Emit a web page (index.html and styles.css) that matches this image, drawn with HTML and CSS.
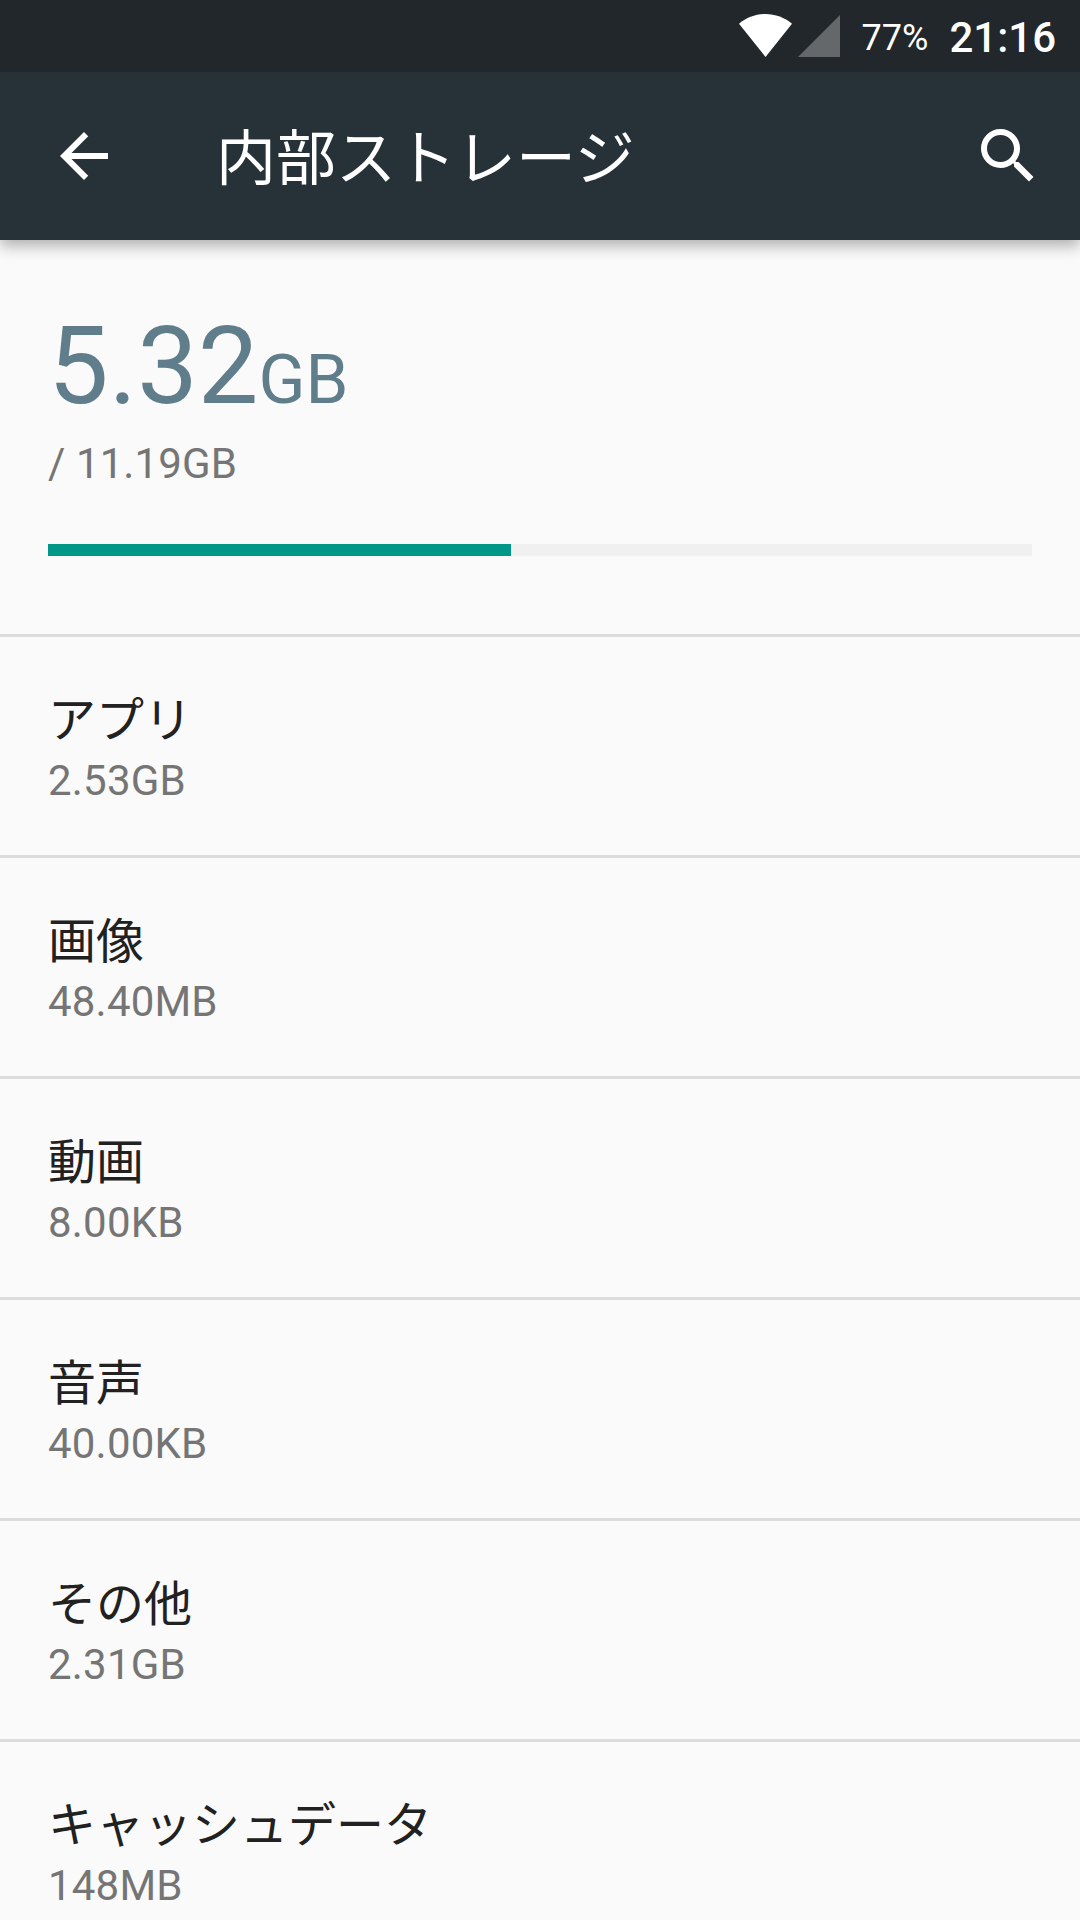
FILE: index.html
```html
<!DOCTYPE html>
<html lang="ja">
<head>
  <meta charset="UTF-8" />
  <meta name="viewport" content="width=device-width, initial-scale=1" />
  <title>内部ストレージ</title>
  <link rel="stylesheet" href="styles.css">
</head>
<body>
  <div class="status-bar">
    <svg class="wifi" viewBox="0 0 53 43"><path d="M0 9.700C7.500 3.500 16.500 0 26.500 0S45.500 3.500 53 9.700L26.500 43z" fill="#fff"/></svg>
    <svg class="signal" viewBox="0 0 42 42"><path d="M42 0v42H0z" fill="#64686a"/></svg>
    <span class="battery">77%</span>
    <span class="clock">21:16</span>
  </div>

  <header class="toolbar">
    <svg class="back" viewBox="0 0 24 24"><path d="M20 11H7.830l5.590-5.590L12 4l-8 8 8 8 1.410-1.410L7.830 13H20v-2z" fill="#fff"/></svg>
    <h1>内部ストレージ</h1>
    <svg class="search" viewBox="0 0 24 24"><path d="M15.500 14h-.79l-.28-.27A6.471 6.471 0 0 0 16 9.500 6.500 6.500 0 1 0 9.500 16c1.610 0 3.090-.59 4.230-1.570l.27.28v.79l5 4.990L20.490 19l-4.990-5zm-6 0C7.010 14 5 11.990 5 9.500S7.010 5 9.500 5 14 7.010 14 9.500 11.990 14 9.500 14z" fill="#fff"/></svg>
  </header>

  <main>
    <section class="summary">
      <div class="used">5.32<span class="unit">GB</span></div>
      <div class="total">/ 11.19GB</div>
      <div class="progress"><div class="progress-fill" style="width: 47.05%"></div></div>
    </section>

    <ul class="list">
      <li><div class="name">アプリ</div><div class="size">2.53GB</div></li>
      <li><div class="name">画像</div><div class="size">48.40MB</div></li>
      <li><div class="name">動画</div><div class="size">8.00KB</div></li>
      <li><div class="name">音声</div><div class="size">40.00KB</div></li>
      <li><div class="name">その他</div><div class="size">2.31GB</div></li>
      <li><div class="name">キャッシュデータ</div><div class="size">148MB</div></li>
    </ul>
  </main>
</body>
</html>
```
FILE: styles.css
```css
* {
  box-sizing: border-box;
}

body {
  margin: 0;
  height: 1920px;
  overflow: hidden;
  display: flex;
  flex-direction: column;
  background-color: #fafafa;
  color: #212121;
  font-family: Roboto, "Noto Sans CJK JP", sans-serif;
}

svg {
  display: block;
  flex: none;
}

/* Status bar, stays above the toolbar shadow */
.status-bar {
  flex: none;
  position: relative;
  z-index: 2;
  height: 72px;
  padding-right: 24px;
  display: flex;
  align-items: center;
  justify-content: flex-end;
  background-color: #21272b;
  color: #fff;
}

.wifi {
  width: 53px;
  height: 43px;
  margin-bottom: 1px;
}

.signal {
  width: 42px;
  height: 42px;
  margin-left: 6px;
}

.battery {
  margin: 4px 0 0 22px;
  font-size: 36px;
  line-height: 68px;
}

.clock {
  margin: 4px 0 0 21px;
  font-size: 42px;
  font-weight: 500;
  line-height: 68px;
}

/* Toolbar */
.toolbar {
  flex: none;
  position: relative;
  z-index: 1;
  height: 168px;
  padding: 0 36px 0 48px;
  display: flex;
  align-items: center;
  background-color: #263238;
  color: #fff;
  box-shadow: 0 6px 14px rgba(0, 0, 0, 0.3);
}

.back {
  width: 72px;
  height: 72px;
}

.toolbar h1 {
  flex: 1;
  margin: 8px 0 0 96px;
  font-size: 60px;
  font-weight: 400;
  line-height: 88px;
}

.search {
  width: 72px;
  height: 72px;
}

/* Used space */
.summary {
  height: 397px;
  padding: 64px 48px 0;
  border-bottom: 3px solid #dcdcdc;
}

.used {
  height: 124px;
  font-size: 108px;
  line-height: 124px;
  color: #607d8b;
}

.unit {
  font-size: 69px;
}

.total {
  margin-top: 11px;
  font-size: 42px;
  line-height: 50px;
  letter-spacing: 0.1px;
  color: #757575;
}

.progress {
  height: 12px;
  margin-top: 55px;
  background-color: #f0f0f0;
}

.progress-fill {
  height: 12px;
  background-color: #009688;
}

/* Categories */
.list {
  margin: 0;
  padding: 0;
  list-style: none;
}

.list li {
  height: 221px;
  padding: 48px 48px 0;
  border-bottom: 3px solid #dcdcdc;
}

.name {
  height: 71px;
  font-size: 48px;
  line-height: 72px;
}

.size {
  font-size: 42px;
  line-height: 50px;
  letter-spacing: 0.2px;
  color: #757575;
}
```
